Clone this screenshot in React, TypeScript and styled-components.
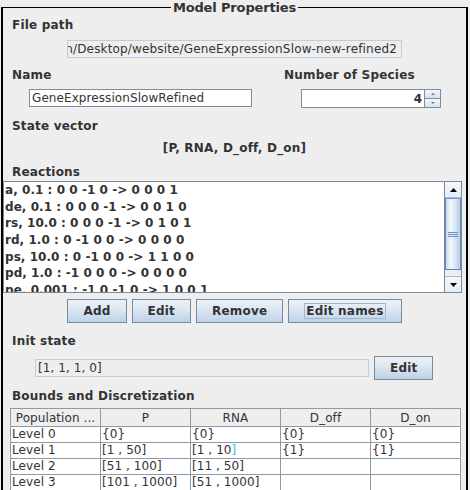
import styled, { createGlobalStyle } from "styled-components"

const GlobalStyle = createGlobalStyle`
  html, body {
    margin: 0;
    padding: 0;
    overflow: hidden;
    background: #eeeeee;
  }
  body {
    font-family: "DejaVu Sans", "Liberation Sans", sans-serif;
    font-size: 12px;
    letter-spacing: 0.08px;
    color: #333333;
  }
`

const Frame = styled.div`
  width: 470px;
  height: 490px;
  overflow: hidden;
  padding-left: 1px;
  box-sizing: border-box;
`

const Panel = styled.fieldset`
  margin: 0;
  width: 467px;
  box-sizing: border-box;
  min-inline-size: 0;
  padding: 0 0 24px;
  border: 0;
  border-top: 1px solid #000;
  border-left: 2px solid #000;
  border-right: 2px solid #000;
`

const Title = styled.legend`
  margin: 0 auto;
  padding: 0 2px;
  font-size: 13px;
  font-weight: bold;
  line-height: 15px;
  letter-spacing: -0.15px;
  color: #333;
`

const SectionLabel = styled.div<{ $top: number }>`
  margin: ${(p) => p.$top}px 0 0 9px;
  font-weight: bold;
  line-height: 14px;
  letter-spacing: 0.2px;
`

const ReadOnlyField = styled.div<{ $left: number; $width: number; $alignEnd?: boolean }>`
  margin-left: ${(p) => p.$left}px;
  width: ${(p) => p.$width}px;
  height: 18px;
  box-sizing: border-box;
  border: 1px solid #b8cfe5;
  background: #eeeeee;
  display: flex;
  align-items: center;
  justify-content: ${(p) => (p.$alignEnd ? "flex-end" : "flex-start")};
  padding: 0 ${(p) => (p.$alignEnd ? 4 : 2)}px 0 2px;
  overflow: hidden;
  white-space: nowrap;
  line-height: 16px;
`

const PathText = styled.span`
  letter-spacing: 0.16px;
`

const TwoColumns = styled.div`
  display: grid;
  grid-template-columns: 272px 1fr;
  margin-top: 10px;
  padding-left: 9px;
`

const Column = styled.div`
  display: flex;
  flex-direction: column;
`

const ColumnLabel = styled.div`
  font-weight: bold;
  line-height: 14px;
  letter-spacing: 0.2px;
`

const TextInput = styled.input`
  margin: 7px 0 0 17px;
  width: 223px;
  height: 18px;
  box-sizing: border-box;
  border: 1px solid #7f8c99;
  padding: 0 2px;
  background: #fff;
  font: 12px "DejaVu Sans", sans-serif;
  letter-spacing: 0.08px;
  color: #333;
  outline: none;
`

const Spinner = styled.div`
  margin: 7px 0 0 17px;
  width: 140px;
  height: 19px;
  box-sizing: border-box;
  display: flex;
  border: 1px solid #7f8c99;
  background: #fff;
`

const SpinnerInput = styled.input`
  flex: 1;
  min-width: 0;
  border: 0;
  padding: 0 2px;
  background: transparent;
  font: bold 12px "DejaVu Sans", sans-serif;
  text-align: right;
  color: #333;
  outline: none;
`

const SpinnerButtons = styled.div`
  width: 15px;
  display: flex;
  flex-direction: column;
  border-left: 1px solid #7f8c99;
`

const SpinButton = styled.div`
  flex: 1;
  display: flex;
  align-items: center;
  justify-content: center;
  background: linear-gradient(#f3f7fb, #d6e2ee);

  & + & {
    border-top: 1px solid #7f8c99;
  }
`

const VectorText = styled.div`
  margin-top: 8px;
  text-align: center;
  font-weight: bold;
  line-height: 14px;
  letter-spacing: 0.2px;
`

const ListBox = styled.div`
  margin: 2px 4px 0 0;
  height: 112px;
  box-sizing: border-box;
  border: 1px solid #7a8a99;
  background: #fff;
  display: flex;
`

const ListRows = styled.div`
  flex: 1;
  overflow: hidden;
  padding-left: 1px;
  font-weight: bold;
  line-height: 16.67px;
  letter-spacing: 0.05px;
  white-space: nowrap;
`

const ScrollBar = styled.div`
  width: 16px;
  display: flex;
  flex-direction: column;
  border-left: 1px solid #7a8a99;
  background: #eeeeee;
`

const ScrollArrow = styled.div<{ $down?: boolean }>`
  height: 16px;
  box-sizing: border-box;
  display: flex;
  align-items: center;
  justify-content: center;
  background: linear-gradient(#f6f9fc, #e4ecf4);
  border-${(p) => (p.$down ? "top" : "bottom")}: 1px solid #a3b8cc;
`

const Thumb = styled.div`
  height: 72px;
  box-sizing: border-box;
  border: 1px solid #6382be;
  border-top-color: #7a9ad0;
  background: linear-gradient(to right, #c9dbee, #f4f8fc 35%, #dde8f3 60%, #b8cfe5);
  display: flex;
  flex-direction: column;
  align-items: center;
  justify-content: center;
  gap: 1px;
`

const GripLine = styled.div`
  width: 10px;
  height: 1px;
  background: #6f8fc6;
`

const Track = styled.div`
  flex: 1;
`

const ButtonRow = styled.div`
  display: flex;
  justify-content: center;
  gap: 5px;
  margin-top: 6px;
`

const Button = styled.button`
  height: 24px;
  padding: 0 15px;
  border: 1px solid #7a8a99;
  border-radius: 0;
  background: linear-gradient(#ecf2f8, #dde8f3 40%, #bdd2e7);
  font: bold 12px "DejaVu Sans", sans-serif;
  letter-spacing: 0.2px;
  color: #333;
  display: flex;
  align-items: center;
  justify-content: center;
`

const FocusRing = styled.span`
  border: 1px solid #a3b8cc;
  padding: 0 1px;
  line-height: 14px;
`

const InitRow = styled.div`
  display: flex;
  align-items: center;
  gap: 5px;
  margin-top: 8px;
  padding-left: 32px;
`

const Grid = styled.table`
  margin: 5px 0 0 7px;
  width: 451px;
  border-collapse: collapse;
  table-layout: fixed;
`

const HeadCell = styled.th`
  height: 17px;
  padding: 0;
  border: 1px solid #8d9aa7;
  background: #eeeeee;
  font-weight: normal;
  text-align: center;
  line-height: 16px;
  white-space: nowrap;
  overflow: hidden;
`

const Cell = styled.td`
  height: 15px;
  padding: 0 1px;
  border: 1px solid #8d9aa7;
  background: #fff;
  line-height: 15px;
  white-space: nowrap;
  overflow: hidden;
`

const Edited = styled.span`
  color: #2cc6e4;
`

function Arrow({ down, w, h, color }: { down?: boolean; w: number; h: number; color: string }) {
  const points = down ? `0,0 ${w / 2},${h} ${w},0` : `0,${h} ${w / 2},0 ${w},${h}`
  return (
    <svg width={w} height={h} viewBox={`0 0 ${w} ${h}`}>
      <polygon points={points} fill={color} />
    </svg>
  )
}

const reactions = [
  "a, 0.1 : 0 0 -1 0 -> 0 0 0 1",
  "de, 0.1 : 0 0 0 -1 -> 0 0 1 0",
  "rs, 10.0 : 0 0 0 -1 -> 0 1 0 1",
  "rd, 1.0 : 0 -1 0 0 -> 0 0 0 0",
  "ps, 10.0 : 0 -1 0 0 -> 1 1 0 0",
  "pd, 1.0 : -1 0 0 0 -> 0 0 0 0",
  "pe, 0.001 : -1 0 -1 0 -> 1 0 0 1",
]

const columns = ["Population ...", "P", "RNA", "D_off", "D_on"]

const levels = [
  ["Level 0", "{0}", "{0}", "{0}", "{0}"],
  ["Level 1", "[1 , 50]", "[1 , 10]", "{1}", "{1}"],
  ["Level 2", "[51 , 100]", "[11 , 50]", "", ""],
  ["Level 3", "[101 , 1000]", "[51 , 1000]", "", ""],
]

export default function App() {
  return (
    <Frame>
      <GlobalStyle />
      <Panel>
        <Title>Model Properties</Title>

        <SectionLabel $top={3}>File path</SectionLabel>
        <ReadOnlyField $left={64} $width={335} $alignEnd style={{ marginTop: 8 }}>
          <PathText>/home/admin/Desktop/website/GeneExpressionSlow-new-refined2</PathText>
        </ReadOnlyField>

        <TwoColumns>
          <Column>
            <ColumnLabel>Name</ColumnLabel>
            <TextInput defaultValue="GeneExpressionSlowRefined" />
          </Column>
          <Column>
            <ColumnLabel>Number of Species</ColumnLabel>
            <Spinner>
              <SpinnerInput defaultValue="4" />
              <SpinnerButtons>
                <SpinButton>
                  <Arrow w={4} h={2} color="#6d7b88" />
                </SpinButton>
                <SpinButton>
                  <Arrow down w={4} h={2} color="#6d7b88" />
                </SpinButton>
              </SpinnerButtons>
            </Spinner>
          </Column>
        </TwoColumns>

        <SectionLabel $top={11}>State vector</SectionLabel>
        <VectorText>[P, RNA, D_off, D_on]</VectorText>

        <SectionLabel $top={10}>Reactions</SectionLabel>
        <ListBox>
          <ListRows>
            {reactions.map((r) => (
              <div key={r}>{r}</div>
            ))}
          </ListRows>
          <ScrollBar>
            <ScrollArrow>
              <Arrow w={7} h={4} color="#000" />
            </ScrollArrow>
            <Thumb>
              <GripLine />
              <GripLine />
              <GripLine />
            </Thumb>
            <Track />
            <ScrollArrow $down>
              <Arrow down w={7} h={4} color="#000" />
            </ScrollArrow>
          </ScrollBar>
        </ListBox>

        <ButtonRow>
          <Button>Add</Button>
          <Button>Edit</Button>
          <Button>Remove</Button>
          <Button>
            <FocusRing>Edit names</FocusRing>
          </Button>
        </ButtonRow>

        <SectionLabel $top={11}>Init state</SectionLabel>
        <InitRow>
          <ReadOnlyField $left={0} $width={334}>
            [1, 1, 1, 0]
          </ReadOnlyField>
          <Button>Edit</Button>
        </InitRow>

        <SectionLabel $top={9}>Bounds and Discretization</SectionLabel>
        <Grid>
          <thead>
            <tr>
              {columns.map((c) => (
                <HeadCell key={c}>{c}</HeadCell>
              ))}
            </tr>
          </thead>
          <tbody>
            {levels.map((row) => (
              <tr key={row[0]}>
                {row.map((v, i) =>
                  v === "[1 , 10]" ? (
                    <Cell key={i}>
                      [1 , 10<Edited>]</Edited>
                    </Cell>
                  ) : (
                    <Cell key={i}>{v}</Cell>
                  )
                )}
              </tr>
            ))}
          </tbody>
        </Grid>
      </Panel>
    </Frame>
  )
}
